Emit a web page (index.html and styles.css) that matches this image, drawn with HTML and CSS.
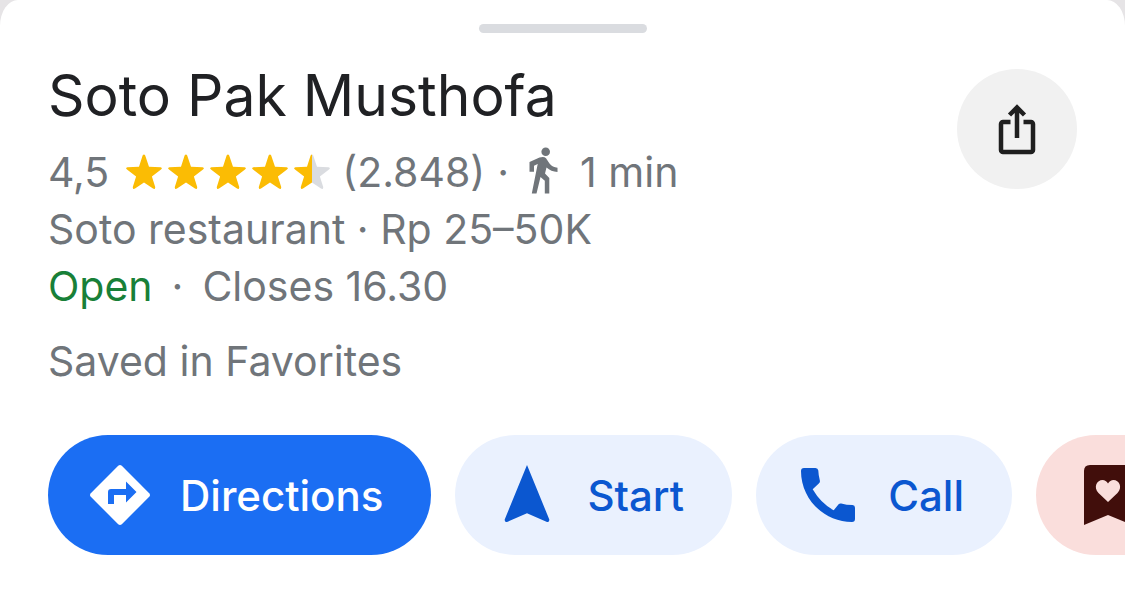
FILE: index.html
```html
<!DOCTYPE html>
<html lang="en">
<head>
<meta charset="utf-8">
<meta name="viewport" content="width=device-width, initial-scale=1">
<title>Soto Pak Musthofa</title>
<link rel="stylesheet" href="styles.css">
</head>
<body>
<svg class="symbols" aria-hidden="true">
  <symbol id="star" viewBox="0 0 36 35">
    <path d="M16.6 1.6Q18-.6 19.2 1.6L23 12.8 34.6 13.2Q37 13.8 35 15.4L25.900 22.400 29.200 33Q29.400 35.600 27 34.600L18 28.400 9 34.600Q6.600 35.600 6.800 33L10.100 22.400 1 15.400Q-1 13.800 1.400 13.200L13 12.800Z"/>
  </symbol>
</svg>
<main class="sheet">
  <div class="handle"></div>
  <header class="place">
    <div class="info">
      <h1 class="name">Soto Pak Musthofa</h1>
      <div class="line rating">
        <span>4,5</span>
        <span class="stars" role="img" aria-label="4,5">
          <svg class="star"><use href="#star"/></svg>
          <svg class="star"><use href="#star"/></svg>
          <svg class="star"><use href="#star"/></svg>
          <svg class="star"><use href="#star"/></svg>
          <svg class="star" viewBox="0 0 36 35">
            <defs><linearGradient id="half"><stop offset="50%" stop-color="#fbbc04"/><stop offset="50%" stop-color="#dadce0"/></linearGradient></defs>
            <path fill="url(#half)" d="M16.6 1.6Q18-.6 19.2 1.6L23 12.8 34.6 13.2Q37 13.8 35 15.4L25.900 22.400 29.200 33Q29.400 35.600 27 34.600L18 28.400 9 34.600Q6.600 35.600 6.800 33L10.100 22.400 1 15.400Q-1 13.800 1.400 13.200L13 12.800Z"/>
          </svg>
        </span>
        <span>(2.848)</span>
        <span class="dot">·</span>
        <svg class="walk" viewBox="0 0 29 48" aria-hidden="true"><circle cx="16.700" cy="4.800" r="4.300"/><path d="M.5 24.700V15L10.500 10.500Q15 9 17 11.300L20.500 16.500Q23.500 20.300 28.500 20.800V25Q22 24.700 17.500 20.500L16 26.500 20.300 31V46.500H15.800V33.700L11.500 30 7.500 46.500H2.800L8.700 17 5 18.700V24.700Z"/></svg>
        <span>1 min</span>
      </div>
      <p class="line">Soto restaurant · Rp 25–50K</p>
      <p class="line hours"><span class="open">Open</span><span>·</span><span>Closes 16.30</span></p>
    </div>
    <button class="share" type="button" aria-label="Share">
      <svg class="icon" viewBox="0 0 60 60" fill="none" stroke="#1f1f1f" stroke-width="4.500">
        <path d="M23.500 23H16a2 2 0 0 0-2 2v26a2 2 0 0 0 2 2h28a2 2 0 0 0 2-2V25a2 2 0 0 0-2-2h-7.500M30 39V9M22.500 16 30 8.500l7.500 7.500"/>
      </svg>
    </button>
  </header>
  <p class="line saved">Saved in Favorites</p>
  <nav class="actions">
    <button class="pill primary" type="button">
      <svg class="icon" viewBox="0 0 60 60" aria-hidden="true"><path fill="#fff" d="M28.200.8Q30-.8 31.800.8L59.200 28.200Q60.800 30 59.200 31.800L31.800 59.200Q30 60.800 28.200 59.200L.8 31.800Q-.8 30 .8 28.200Z"/><path fill="#1b6ef3" d="M18 39V27q0-3 3-3h15v-7.500L46.500 27 36 37.500V30H24v9Z"/></svg>
      <span>Directions</span>
    </button>
    <button class="pill" type="button">
      <svg class="icon" viewBox="0 0 60 60" aria-hidden="true"><path d="M30 0 52.300 54.500Q52.500 57.500 50 57L30 48.300 10 57Q7.500 57.500 7.700 54.500Z"/></svg>
      <span>Start</span>
    </button>
    <button class="pill" type="button">
      <svg class="icon" viewBox="0 0 60 60" aria-hidden="true"><path d="M6 3H17.500Q20 3 20.300 5.500Q20.500 10.500 21.800 15.200Q22.400 17.200 20.800 18.600L14.700 24.300Q22.500 38 35.700 45.300L40.600 39.300Q41.600 38.100 43.200 38.500Q48.500 40 54.500 40Q57 40.200 57 42.700V54Q57 57 54 57C26 57 3 34 3 6Q3 3 6 3Z"/></svg>
      <span>Call</span>
    </button>
    <button class="pill favorite" type="button" aria-label="Favorites">
      <svg class="icon" viewBox="0 0 60 60" aria-hidden="true"><path d="M12 0H48Q54 0 54 6V60L30 50 6 60V6Q6 0 12 0Z"/><path fill="#fadedc" d="M30 37 20.500 28C15 22 19 15 24.500 15Q28 15 30 18.500Q32 15 35.500 15C41 15 45 22 39.500 28Z"/></svg>
    </button>
  </nav>
</main>
</body>
</html>
```
FILE: styles.css
```css
* { box-sizing: border-box; }
body {
  margin: 0;
  background: #e6e4e6;
  font-family: Inter, "Liberation Sans", sans-serif;
  color: #70757a;
  overflow-x: hidden;
}
.symbols { position: absolute; width: 0; height: 0; }
.sheet {
  min-height: 100vh;
  padding: 24px 48px 52px;
  background: #fff;
  border-radius: 18px 18px 0 0 / 26px 26px 0 0;
  overflow: hidden;
}
.handle {
  width: 168px;
  height: 9px;
  margin: 0 auto;
  border-radius: 5px;
  background: #dadce0;
}
.place {
  display: flex;
  justify-content: space-between;
  align-items: flex-start;
  padding-top: 27px;
}
.name {
  margin: 0 0 12px;
  font-size: 57px;
  font-weight: 400;
  line-height: 72px;
  color: #202124;
}
.line {
  margin: 0;
  font-size: 41px;
  line-height: 57px;
  white-space: nowrap;
}
.rating { display: flex; align-items: center; }
.stars { display: flex; gap: 6px; margin: 0 12px 2px 17px; }
.star { width: 36px; height: 35px; fill: #fbbc04; }
.dot { margin: 0 20px 0 12px; }
.walk { width: 29px; height: 48px; margin: 0 22px 4px 0; fill: #70757a; }
.hours { display: flex; gap: 19px; }
.open { color: #188038; }
.saved { margin-top: 18px; }
.share {
  flex: none;
  display: grid;
  place-items: center;
  width: 120px;
  height: 120px;
  margin-top: 9px;
  padding: 0;
  border: 0;
  border-radius: 50%;
  background: #f1f1f1;
}
.actions { display: flex; gap: 24px; margin-top: 45px; }
.icon { flex: none; display: block; width: 60px; height: 60px; }
.pill {
  flex: none;
  display: flex;
  align-items: center;
  gap: 30px;
  height: 120px;
  padding: 0 48px 0 42px;
  border: 0;
  border-radius: 60px;
  background: #eaf1fe;
  color: #0b57d0;
  fill: #0b57d0;
  font: 500 42px Inter, "Liberation Sans", sans-serif;
}
.primary { background: #1b6ef3; color: #fff; }
.favorite { background: #fadedc; fill: #410e0b; }
```
